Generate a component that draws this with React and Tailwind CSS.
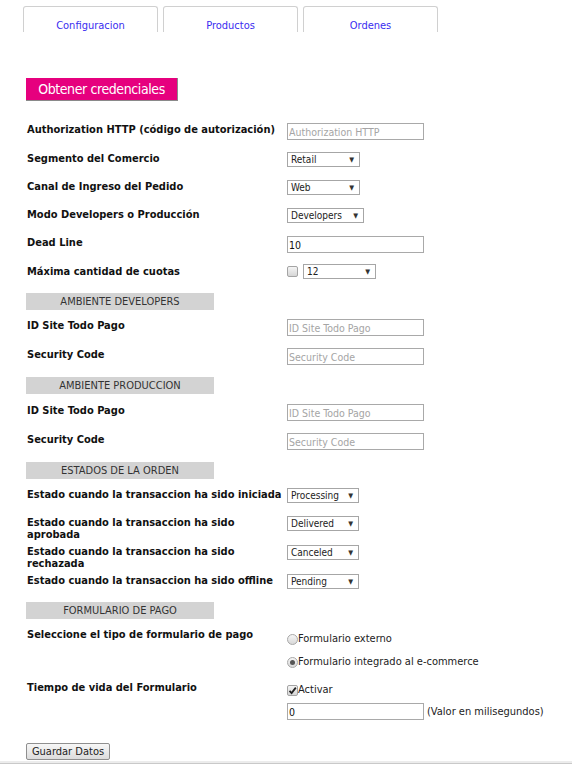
import React from 'react';

const sans = "font-['DejaVu_Sans_Condensed','DejaVu_Sans',sans-serif]";

function Tab({ children }) {
  return (
    <div className="w-[135px] h-[26px] border border-b-0 border-[#d0d0d0] rounded-t-[3px] text-center pt-[12px] text-[11px] leading-[13px] text-[#3a2df0]">
      {children}
    </div>
  );
}

function Label({ children }) {
  return (
    <div className="w-[260px] shrink-0 pt-[1px] text-[11px] leading-[12px] font-bold text-[#111] whitespace-nowrap">
      {children}
    </div>
  );
}

function Select({ value, w }) {
  return (
    <div className={`${w} h-[15px] border border-[#a6a6a6] bg-white flex items-center justify-between pl-[3px] pr-[5px] text-[10px] leading-[13px] text-[#222]`}>
      <span>{value}</span>
      <span className="text-[7px] leading-[8px] text-[#333]">▼</span>
    </div>
  );
}

function Field({ placeholder, value }) {
  return (
    <input
      className="w-[137px] h-[17px] border border-[#a9a9a9] px-[1px] text-[10.5px] text-[#111] placeholder:text-[#a5a5a5] outline-none"
      placeholder={placeholder}
      defaultValue={value}
    />
  );
}

function Check({ checked }) {
  return (
    <span className="inline-flex w-[11px] h-[11px] rounded-[2px] border border-[#a4a4a4] bg-gradient-to-b from-[#f5f5f5] to-[#d6d6d6] items-center justify-center">
      {checked && (
        <svg width="9" height="9" viewBox="0 0 9 9">
          <path d="M1.5 4.8 L3.6 7 L7.8 1.6" fill="none" stroke="#222" strokeWidth="1.8" />
        </svg>
      )}
    </span>
  );
}

function Radio({ checked }) {
  return (
    <span className="inline-flex w-[11px] h-[11px] rounded-full border border-[#a8a8a8] bg-gradient-to-b from-[#f6f6f6] to-[#d8d8d8] items-center justify-center">
      {checked && <span className="w-[5px] h-[5px] rounded-full bg-[#555]" />}
    </span>
  );
}

function Header({ children }) {
  return (
    <div className="ml-[26px] w-[188px] h-[17px] bg-[#d3d3d3] text-center text-[11px] leading-[17px] text-[#333]">
      {children}
    </div>
  );
}

export default function App() {
  return (
    <div className={`w-[572px] min-h-[764px] bg-white ${sans} flex flex-col`}>
      <div className="flex gap-[5px] pl-[23px] pt-[6px]">
        <Tab>Configuracion</Tab>
        <Tab>Productos</Tab>
        <Tab>Ordenes</Tab>
      </div>

      <button className="ml-[26px] mt-[46px] w-[152px] h-[23px] bg-[#e6007e] text-white text-[14px] leading-[23px] tracking-[-0.4px] border-r border-b border-[#8a8a8a] text-center">
        Obtener credenciales
      </button>

      <div className="pl-[27px] mt-[22px] flex flex-col">
        <div className="flex items-start h-[29px]">
          <Label>Authorization HTTP (código de autorización)</Label>
          <Field placeholder="Authorization HTTP" />
        </div>
        <div className="flex items-start h-[28px]">
          <Label>Segmento del Comercio</Label>
          <Select value="Retail" w="w-[73px]" />
        </div>
        <div className="flex items-start h-[28px]">
          <Label>Canal de Ingreso del Pedido</Label>
          <Select value="Web" w="w-[73px]" />
        </div>
        <div className="flex items-start h-[28px]">
          <Label>Modo Developers o Producción</Label>
          <Select value="Developers" w="w-[77px]" />
        </div>
        <div className="flex items-start h-[28px]">
          <Label>Dead Line</Label>
          <Field value="10" />
        </div>
        <div className="flex items-start h-[29px]">
          <div className="pt-[1px]">
            <Label>Máxima cantidad de cuotas</Label>
          </div>
          <div className="flex items-center gap-[5px]">
            <Check />
            <Select value="12" w="w-[73px]" />
          </div>
        </div>
      </div>

      <Header>AMBIENTE DEVELOPERS</Header>
      <div className="pl-[27px] mt-[9px] flex flex-col">
        <div className="flex items-start h-[29px]">
          <Label>ID Site Todo Pago</Label>
          <Field placeholder="ID Site Todo Pago" />
        </div>
        <div className="flex items-start h-[29px]">
          <Label>Security Code</Label>
          <Field placeholder="Security Code" />
        </div>
      </div>

      <Header>AMBIENTE PRODUCCION</Header>
      <div className="pl-[27px] mt-[10px] flex flex-col">
        <div className="flex items-start h-[29px]">
          <Label>ID Site Todo Pago</Label>
          <Field placeholder="ID Site Todo Pago" />
        </div>
        <div className="flex items-start h-[29px]">
          <Label>Security Code</Label>
          <Field placeholder="Security Code" />
        </div>
      </div>

      <Header>ESTADOS DE LA ORDEN</Header>
      <div className="pl-[27px] mt-[9px] flex flex-col">
        <div className="flex items-start h-[28px]">
          <Label>Estado cuando la transaccion ha sido iniciada</Label>
          <Select value="Processing" w="w-[72px]" />
        </div>
        <div className="flex items-start h-[29px]">
          <Label>Estado cuando la transaccion ha sido<br />aprobada</Label>
          <Select value="Delivered" w="w-[72px]" />
        </div>
        <div className="flex items-start h-[29px]">
          <Label>Estado cuando la transaccion ha sido<br />rechazada</Label>
          <Select value="Canceled" w="w-[72px]" />
        </div>
        <div className="flex items-start h-[28px]">
          <Label>Estado cuando la transaccion ha sido offline</Label>
          <Select value="Pending" w="w-[72px]" />
        </div>
      </div>

      <Header>FORMULARIO DE PAGO</Header>
      <div className="pl-[27px] mt-[9px] flex flex-col">
        <div className="flex items-start h-[53px]">
          <Label>Seleccione el tipo de formulario de pago</Label>
          <div className="pt-[5px] flex flex-col gap-[11px] text-[11px] leading-[12px] text-[#222]">
            <div className="flex items-center"><Radio /><span>Formulario externo</span></div>
            <div className="flex items-center"><Radio checked /><span>Formulario integrado al e-commerce</span></div>
          </div>
        </div>
        <div className="flex items-start">
          <Label>Tiempo de vida del Formulario</Label>
          <div className="pt-[3px] flex flex-col gap-[7px] text-[11px] leading-[12px] text-[#222]">
            <div className="flex items-center"><Check checked /><span>Activar</span></div>
            <div className="flex items-center gap-[3px]">
              <Field value="0" />
              <span>(Valor en milisegundos)</span>
            </div>
          </div>
        </div>
      </div>

      <button className="ml-[26px] mt-[23px] w-[84px] h-[17px] border border-[#8f8f8f] rounded-[2px] bg-gradient-to-b from-[#f7f7f7] to-[#dcdcdc] text-[11px] leading-[15px] text-[#222] text-center">
        Guardar Datos
      </button>

      <div className="mt-auto h-[3px] border-t-2 border-[#ececec] bg-[#c9c9c9]" />
    </div>
  );
}
